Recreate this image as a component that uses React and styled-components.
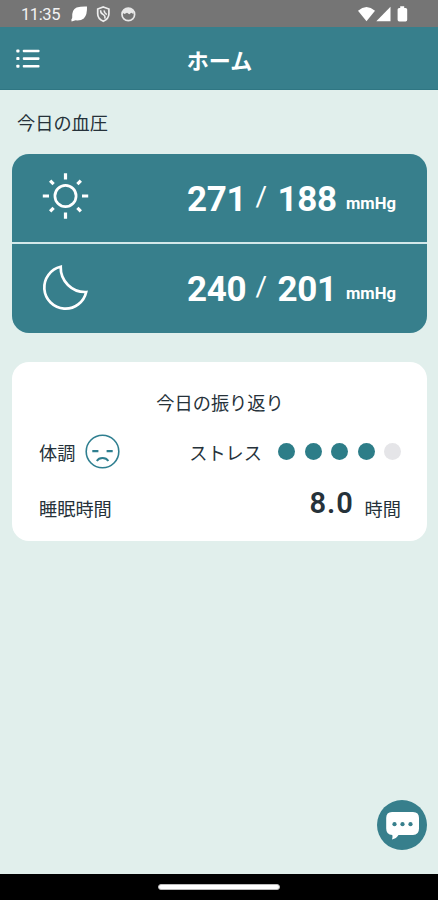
import React from "react";
import styled, { createGlobalStyle } from "styled-components";

const teal = "#377f8c";

const GlobalStyle = createGlobalStyle`
  * { box-sizing: border-box; }
  body { margin: 0; background: #e1efec; }
  svg { display: block; flex: none; }
`;

const Screen = styled.div`
  width: 438px;
  height: 900px;
  display: flex;
  flex-direction: column;
  overflow: hidden;
  background: #e1efec;
  color: #26323a;
  font-family: "Noto Sans CJK JP", sans-serif;
`;

const StatusBar = styled.div`
  height: 27px;
  flex: none;
  display: flex;
  align-items: center;
  justify-content: space-between;
  padding: 1px 30px 0 21px;
  background: #757575;
  color: #f3f3f3;
`;

const StatusGroup = styled.div`
  display: flex;
  align-items: center;
  gap: 8px;
`;

const Clock = styled.span`
  width: 40px;
  margin-right: 1px;
  font: 400 16.5px/27px Roboto, sans-serif;
  letter-spacing: -0.4px;
`;

const Header = styled.header`
  height: 62.5px;
  flex: none;
  display: grid;
  grid-template-columns: 60px 1fr 60px;
  align-items: center;
  background: ${teal};
  border-bottom: 1px solid #2f7683;
  color: #fff;
`;

const MenuButton = styled.button`
  border: 0;
  padding: 2px 0 0 16px;
  background: none;
  color: inherit;
`;

const Title = styled.h1`
  margin: 3px 0 0 1px;
  font-size: 22px;
  line-height: 32px;
  font-weight: 700;
  text-align: center;
`;

const Main = styled.main`
  position: relative;
  flex: 1;
  padding: 0 11px 0 12px;
`;

const SectionTitle = styled.h2`
  margin: 0;
  padding: 17.5px 0 16px 5px;
  font-size: 18.2px;
  line-height: 31px;
  font-weight: 400;
`;

const PressureCard = styled.section`
  height: 179px;
  display: grid;
  grid-template-rows: 88px 89px;
  row-gap: 2px;
  overflow: hidden;
  border-radius: 17px;
  background: #d3e8ea;
`;

const PressureRow = styled.div`
  display: flex;
  align-items: center;
  justify-content: space-between;
  padding: 0 31px 4px 30px;
  background: ${teal};
  color: #fff;
`;

const Reading = styled.div`
  display: grid;
  grid-template-columns: 68.5px 22px 68.5px 50px;
  align-items: baseline;
  font-family: Roboto, sans-serif;
  line-height: 40px;
  padding-top: 13px;
`;

const Value = styled.span`
  font-size: 35px;
  font-weight: 700;
  letter-spacing: -0.3px;
`;

const Slash = styled.span`
  position: relative;
  top: -5px;
  font-size: 28px;
  font-weight: 400;
`;

const Unit = styled.span`
  position: relative;
  top: -2px;
  font-size: 16.6px;
  font-weight: 700;
`;

const ReviewCard = styled.section`
  height: 179px;
  margin-top: 29px;
  padding: 24px 26px 0 27px;
  border-radius: 17px;
  background: #fff;
`;

const ReviewTitle = styled.h2`
  margin: 0;
  font-size: 18.2px;
  line-height: 32px;
  font-weight: 400;
  text-align: center;
`;

const ReviewRow = styled.div`
  height: ${(p) => p.$height}px;
  display: flex;
  align-items: center;
  justify-content: space-between;
`;

const Pair = styled.div`
  display: flex;
  align-items: center;
  gap: ${(p) => p.$gap}px;
`;

const Label = styled.span`
  font-size: 18.2px;
  line-height: 30px;
`;

const Dots = styled.div`
  display: flex;
  gap: 9.5px;
`;

const Dot = styled.i`
  width: 17px;
  height: 17px;
  border-radius: 50%;
  background: ${(p) => (p.$on ? "#2d7d88" : "#e5e5e8")};
`;

const Sleep = styled.div`
  display: flex;
  align-items: center;
  gap: 11px;
`;

const Hours = styled.strong`
  margin-top: -10px;
  font: 600 29px/36px Roboto, sans-serif;
  letter-spacing: 0.9px;
`;

const ChatButton = styled.button`
  position: absolute;
  right: 11px;
  bottom: 24px;
  width: 50px;
  height: 50px;
  border: 0;
  padding: 0;
  border-radius: 50%;
  background: ${teal};
`;

const NavBar = styled.footer`
  height: 26px;
  flex: none;
  display: flex;
  justify-content: center;
  padding-top: 10px;
  background: #000;
`;

const HomeHandle = styled.div`
  width: 122px;
  height: 6px;
  border-radius: 3px;
  background: #fff;
  border: 0.5px solid #bbb;
`;

const NoticeIcons = () => (
  <svg width="66" height="18" viewBox="0 0 66 18" fill="none">
    <path d="M1.6 16.6Q.8 14.2 2.2 13Q1.6 4.6 6.6 2.6Q11 1.2 17 1.5Q17.4 10 13.8 13.4Q11 15.8 5.6 15.3Z" fill="#fff" />
    <path d="M33.3 2L38.9 4V9Q38.9 13.6 33.3 16.2Q27.7 13.6 27.7 9V4Z" stroke="#eee" strokeWidth="1.7" />
    <path d="M30.6 5.2Q30.4 8.4 33.4 9.6Q35.6 11 34.8 13.6M34.4 5.4Q33.6 7.4 36.8 9.6" stroke="#eee" strokeWidth="1.5" />
    <circle cx="58.3" cy="9.4" r="6.3" stroke="#e8e8e8" strokeWidth="1.7" />
    <path d="M52.8 6Q58.3 1.2 63.8 6L63.3 9L61.3 7.8L59.3 9.2L57 7.8L54.5 9L52.9 8Z" fill="#e8e8e8" />
  </svg>
);

const SignalIcons = () => (
  <svg width="50" height="17" viewBox="0 0 50 17" fill="#fff">
    <path d="M0 4.8Q8.5-2.6 17 4.8L8.5 15.2Z" />
    <path d="M32.5 0.7V15.2H18.3Z" />
    <path d="M42.2 0.3H46.2V2H47.6Q49.2 2 49.2 3.6V13.8Q49.2 15.4 47.6 15.4H41.2Q39.6 15.4 39.6 13.8V3.6Q39.6 2 41.2 2H42.2Z" />
  </svg>
);

const ListIcon = () => (
  <svg width="24" height="20" viewBox="0 0 24 20" fill="#fff">
    {[0.6, 8.2, 15.8].map((y) => (
      <React.Fragment key={y}>
        <rect x="0.3" y={y - 0.1} width="3.2" height="3" rx="0.9" />
        <rect x="6.8" y={y + 0.1} width="16.7" height="2.6" rx="0.8" />
      </React.Fragment>
    ))}
  </svg>
);

const SunIcon = () => (
  <svg width="48" height="48" viewBox="0 0 48 48" fill="none" stroke="#fff">
    <circle cx="23.5" cy="24" r="10.6" strokeWidth="2.7" />
    {[0, 45, 90, 135, 180, 225, 270, 315].map((a) => (
      <path
        key={a}
        d={a % 90 ? "M23.5 2.3V7.2" : "M23.5 1.3V7.5"}
        strokeWidth="3.2"
        transform={`rotate(${a} 23.5 24)`}
      />
    ))}
  </svg>
);

const MoonIcon = () => (
  <svg width="48" height="48" viewBox="0 0 48 48" fill="none" stroke="#fff">
    <path
      d="M18.7 3.8A21.2 21.2 0 1 0 44.2 29A24.5 24.5 0 0 1 18.7 3.8Z"
      strokeWidth="2.7"
    />
  </svg>
);

const SadFace = () => (
  <svg width="35" height="35" viewBox="0 0 35 35" fill="none" stroke="#2f7f90">
    <circle cx="17.5" cy="17.5" r="16.3" strokeWidth="1.6" />
    <path d="M7.3 17.2H13.4M21.6 17.2H27.7" strokeWidth="2.2" />
    <path d="M11.8 27Q13.5 24 17.5 24Q21.5 24 23.4 27" strokeWidth="1.8" />
  </svg>
);

const ChatIcon = () => (
  <svg width="50" height="50" viewBox="0 0 50 50">
    <path
      d="M15 12H36Q42 12 42 18V28.5Q42 35 36 35H21.5Q19.5 38.5 15 39.5Q16 37.5 15.3 35Q9.2 35 9.2 28.5V18Q9.2 12 15 12Z"
      fill="#fff"
    />
    {[17.5, 25.5, 33.5].map((x) => (
      <circle key={x} cx={x} cy="24.2" r="2.1" fill={teal} />
    ))}
  </svg>
);

const Pressure = ({ icon, high, low }) => (
  <PressureRow>
    {icon}
    <Reading>
      <Value>{high}</Value>
      <Slash>/</Slash>
      <Value>{low}</Value>
      <Unit>mmHg</Unit>
    </Reading>
  </PressureRow>
);

export default function App() {
  return (
    <Screen>
      <GlobalStyle />
      <StatusBar>
        <StatusGroup>
          <Clock>11:35</Clock>
          <NoticeIcons />
        </StatusGroup>
        <SignalIcons />
      </StatusBar>
      <Header>
        <MenuButton aria-label="メニュー">
          <ListIcon />
        </MenuButton>
        <Title>ホーム</Title>
      </Header>
      <Main>
        <SectionTitle>今日の血圧</SectionTitle>
        <PressureCard>
          <Pressure icon={<SunIcon />} high={271} low={188} />
          <Pressure icon={<MoonIcon />} high={240} low={201} />
        </PressureCard>
        <ReviewCard>
          <ReviewTitle>今日の振り返り</ReviewTitle>
          <ReviewRow $height={67}>
            <Pair $gap={10}>
              <Label>体調</Label>
              <SadFace />
            </Pair>
            <Pair $gap={16}>
              <Label>ストレス</Label>
              <Dots>
                {[1, 2, 3, 4, 5].map((n) => (
                  <Dot key={n} $on={n <= 4} />
                ))}
              </Dots>
            </Pair>
          </ReviewRow>
          <ReviewRow $height={46}>
            <Label>睡眠時間</Label>
            <Sleep>
              <Hours>8.0</Hours>
              <Label>時間</Label>
            </Sleep>
          </ReviewRow>
        </ReviewCard>
        <ChatButton aria-label="チャット">
          <ChatIcon />
        </ChatButton>
      </Main>
      <NavBar>
        <HomeHandle />
      </NavBar>
    </Screen>
  );
}
